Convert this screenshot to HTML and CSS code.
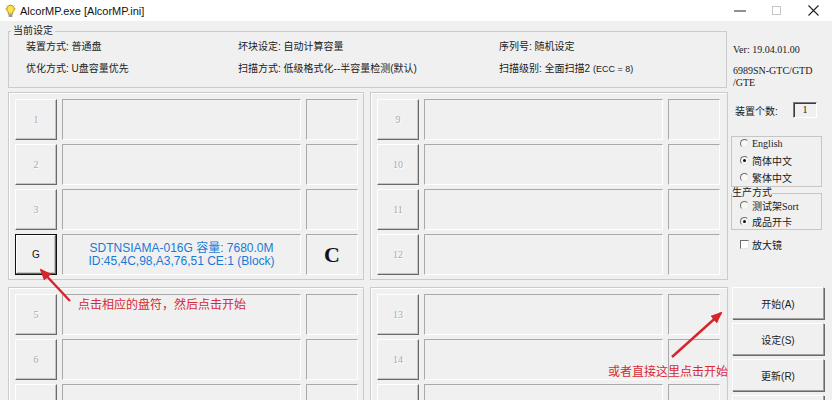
FILE: index.html
```html
<!DOCTYPE html>
<html lang="zh-CN">

<head>
    <meta charset="UTF-8">
    <meta name="viewport" content="width=device-width, initial-scale=1.0">
    <title>AlcorMP.exe [AlcorMP.ini]</title>
    <link rel="stylesheet" href="styles.css">
</head>

<body>
    <div class="window">
        <div class="titlebar">
            <svg class="app-icon" width="11" height="14" viewBox="0 0 11 14">
                <path d="M5.5 1.2a3.8 3.8 0 0 0-2.2 6.9v2h4.4v-2a3.8 3.8 0 0 0-2.2-6.9z" fill="#ffe24a" stroke="#9c8a10" stroke-width="0.9"/>
                <rect x="3.6" y="10.4" width="3.8" height="2.6" fill="#9a9a9a"/>
                <path d="M0.3 4.8h1.2M9.5 4.8h1.2M1.2 1.2l0.9 0.9M9.8 1.2l-0.9 0.9" stroke="#c9a800" stroke-width="0.8"/>
            </svg>
            <span class="title">AlcorMP.exe [AlcorMP.ini]</span>
            <div class="controls">
                <span><svg width="12" height="2"><path d="M0 1h12" stroke="#222" stroke-width="1"/></svg></span>
                <span><svg width="9" height="9"><rect x="0.5" y="0.5" width="8" height="8" fill="none" stroke="#c6c6c6"/></svg></span>
                <span><svg width="11" height="11"><path d="M0.5 0.5l10 10M10.5 0.5l-10 10" stroke="#222" stroke-width="1.1"/></svg></span>
            </div>
        </div>

        <div class="client">
            <div class="main">
                <fieldset class="settings">
                    <legend>当前设定</legend>
                    <div class="settings-grid">
                        <span>装置方式: 普通盘</span>
                        <span>坏块设定: 自动计算容量</span>
                        <span>序列号: 随机设定</span>
                        <span>优化方式: U盘容量优先</span>
                        <span>扫描方式: 低级格式化--半容量检测(默认)</span>
                        <span>扫描级别: 全面扫描2 <small>(ECC = 8)</small></span>
                    </div>
                </fieldset>

                <div class="panels">
                    <div class="panel">
                        <div class="slot"><span class="slot-btn">1</span><span class="slot-info"></span><span class="slot-flag"></span></div>
                        <div class="slot"><span class="slot-btn">2</span><span class="slot-info"></span><span class="slot-flag"></span></div>
                        <div class="slot"><span class="slot-btn">3</span><span class="slot-info"></span><span class="slot-flag"></span></div>
                        <div class="slot">
                            <span class="slot-btn active">G</span>
                            <span class="slot-info device">SDTNSIAMA-016G 容量: 7680.0M<br>ID:45,4C,98,A3,76,51 CE:1 (Block)</span>
                            <span class="slot-flag letter">C</span>
                        </div>
                    </div>
                    <div class="panel">
                        <div class="slot"><span class="slot-btn">9</span><span class="slot-info"></span><span class="slot-flag"></span></div>
                        <div class="slot"><span class="slot-btn">10</span><span class="slot-info"></span><span class="slot-flag"></span></div>
                        <div class="slot"><span class="slot-btn">11</span><span class="slot-info"></span><span class="slot-flag"></span></div>
                        <div class="slot"><span class="slot-btn">12</span><span class="slot-info"></span><span class="slot-flag"></span></div>
                    </div>
                    <div class="panel">
                        <div class="slot"><span class="slot-btn">5</span><span class="slot-info"></span><span class="slot-flag"></span></div>
                        <div class="slot"><span class="slot-btn">6</span><span class="slot-info"></span><span class="slot-flag"></span></div>
                        <div class="slot"><span class="slot-btn"></span><span class="slot-info"></span><span class="slot-flag"></span></div>
                    </div>
                    <div class="panel">
                        <div class="slot"><span class="slot-btn">13</span><span class="slot-info"></span><span class="slot-flag"></span></div>
                        <div class="slot"><span class="slot-btn">14</span><span class="slot-info"></span><span class="slot-flag"></span></div>
                        <div class="slot"><span class="slot-btn"></span><span class="slot-info"></span><span class="slot-flag"></span></div>
                    </div>
                </div>
            </div>

            <div class="side">
                <div class="ver">Ver: 19.04.01.00</div>
                <div class="model">6989SN-GTC/GTD<br>/GTE</div>
                <div class="count">
                    <span class="count-label">装置个数:</span>
                    <span class="count-box">1</span>
                </div>
                <div class="lang">
                    <div class="opt-list">
                        <label class="opt"><span class="radio"></span><span class="latin">English</span></label>
                        <label class="opt"><span class="radio on"></span><span>简体中文</span></label>
                        <label class="opt"><span class="radio"></span><span>繁体中文</span></label>
                    </div>
                </div>
                <fieldset class="mode">
                    <legend>生产方式</legend>
                    <div class="opt-list">
                        <label class="opt"><span class="radio"></span><span>测试架<span class="latin">Sort</span></span></label>
                        <label class="opt"><span class="radio on"></span><span>成品开卡</span></label>
                    </div>
                </fieldset>
                <label class="opt zoom"><span class="check"></span><span>放大镜</span></label>
                <div class="buttons">
                    <button class="btn">开始(A)</button>
                    <button class="btn">设定(S)</button>
                    <button class="btn">更新(R)</button>
                    <button class="btn"></button>
                </div>
            </div>
        </div>

        <!-- 注释箭头 -->
        <svg class="notes" width="832" height="400">
            <defs>
                <marker id="head" markerUnits="userSpaceOnUse" markerWidth="12" markerHeight="10" refX="10" refY="5" orient="auto">
                    <path d="M0 0L12 5L0 10z" fill="#d8232a"/>
                </marker>
            </defs>
            <line x1="70" y1="301" x2="41" y2="270" stroke="#d8232a" stroke-width="2.4" marker-end="url(#head)"/>
            <line x1="672" y1="357" x2="721" y2="313" stroke="#d8232a" stroke-width="2.4" marker-end="url(#head)"/>
        </svg>
        <span class="note note-a">点击相应的盘符，然后点击开始</span>
        <span class="note note-b">或者直接这里点击开始</span>
    </div>
</body>

</html>
```

FILE: styles.css
```css
* {
    box-sizing: border-box;
}

body {
    margin: 0;
    background: #f0f0f0;
    font-family: "Liberation Sans", "Noto Sans CJK SC", sans-serif;
    font-size: 10px;
    color: #1a1a1a;
}

.window {
    position: relative;
    width: 832px;
    height: 400px;
    overflow: hidden;
    background: #f0f0f0;
}

/* 标题栏 */
.titlebar {
    display: flex;
    align-items: center;
    height: 21px;
    background: #fff;
}

.app-icon {
    margin-left: 5px;
}

.title {
    margin-left: 4px;
    font-size: 11px;
    line-height: 14px;
    color: #111;
}

.controls {
    display: flex;
    margin-left: auto;
    height: 21px;
}

.controls span {
    display: flex;
    align-items: center;
    justify-content: center;
    width: 37px;
}

.client {
    display: flex;
}

.main {
    width: 728px;
}

/* 当前设定 */
.settings {
    width: 719px;
    margin: 3px 0 0 8px;
    padding: 0 0 8px 2px;
    border: 1px solid #cbcbcb;
    min-width: 0;
}

.settings legend,
.mode legend {
    padding: 0 2px;
    line-height: 14px;
}

.settings-grid {
    display: grid;
    grid-template-columns: 212px 261px 1fr;
    row-gap: 2px;
    margin: -1px 0 0 15px;
    line-height: 20px;
}

.settings-grid small {
    font-size: 9px;
}

/* 盘位面板 */
.panels {
    display: grid;
    grid-template-columns: 356px 358px;
    column-gap: 6px;
    row-gap: 7px;
    margin: 4px 0 0 8px;
}

.panel {
    display: flex;
    flex-direction: column;
    gap: 4px;
    padding: 6px 0 4px 6px;
    border: 1px solid #cbcbcb;
    box-shadow: inset 1px 1px 0 #fff;
}

.slot {
    display: grid;
    grid-template-columns: 42px 239px 52px;
    column-gap: 5px;
    height: 41px;
    flex-shrink: 0;
}

.slot-btn {
    display: flex;
    align-items: center;
    justify-content: center;
    border: 1px solid;
    border-color: #fff #6a6a6a #6a6a6a #fff;
    box-shadow: inset -1px -1px 0 #c4c4c4;
    font-family: "Liberation Serif", serif;
    font-size: 10px;
    color: #ababab;
    text-shadow: 1px 1px 0 #fff;
}

.slot-btn.active {
    border: 1px solid #111;
    box-shadow: inset -1px -1px 0 #6a6a6a, inset 1px 1px 0 #fff, inset -2px -2px 0 #c4c4c4;
    font-family: "Liberation Sans", sans-serif;
    color: #111;
    text-shadow: none;
}

.slot-info,
.slot-flag {
    border: 1px solid;
    border-color: #a9a9a9 #fff #fff #a9a9a9;
}

.device {
    display: flex;
    align-items: center;
    justify-content: center;
    text-align: center;
    font-size: 12px;
    line-height: 13px;
    color: #1b7ad6;
}

.letter {
    display: flex;
    align-items: center;
    justify-content: center;
    font-family: "Liberation Serif", serif;
    font-weight: bold;
    font-size: 22px;
    color: #111;
}

/* 右侧栏 */
.side {
    display: flex;
    flex-direction: column;
    align-items: flex-start;
    width: 104px;
}

.ver,
.model {
    margin-left: 5px;
    font-family: "Liberation Serif", serif;
    font-size: 10px;
    line-height: 12px;
}

.ver {
    margin-top: 23px;
}

.model {
    margin-top: 9px;
}

.count {
    display: flex;
    align-items: center;
    height: 16px;
    margin: 13px 0 0 7px;
}

.count-label {
    width: 58px;
}

.count-box {
    width: 24px;
    height: 16px;
    border: 1px solid;
    border-color: #7a7a7a #fff #fff #7a7a7a;
    box-shadow: inset 1px 1px 0 #3a3a3a;
    font-family: "Liberation Serif", serif;
    line-height: 14px;
    text-align: center;
}

.lang,
.mode {
    width: 91px;
    margin: 0 0 0 3px;
    border: 1px solid #c6c6c6;
}

.lang {
    margin-top: 18px;
}

.mode {
    padding: 0;
    min-width: 0;
}

.mode legend {
    padding: 0;
    line-height: 12px;
}

.opt-list {
    margin-top: -2px;
}

.opt {
    display: flex;
    align-items: center;
    gap: 3px;
    height: 17px;
    padding-left: 8px;
}

.mode .opt {
    height: 16px;
}

.latin {
    font-family: "Liberation Serif", serif;
}

.radio {
    display: grid;
    place-items: center;
    width: 9px;
    height: 9px;
    border: 1px solid;
    border-color: #6e6e6e #e6e6e6 #e6e6e6 #6e6e6e;
    border-radius: 50%;
    background: #f7f7f7;
}

.radio.on::after {
    content: "";
    width: 3px;
    height: 3px;
    border-radius: 50%;
    background: #111;
}

.zoom {
    margin-top: 6px;
    padding-left: 12px;
}

.check {
    width: 9px;
    height: 9px;
    border: 1px solid;
    border-color: #6e6e6e #e6e6e6 #e6e6e6 #6e6e6e;
    background: #fff;
}

.buttons {
    display: flex;
    flex-direction: column;
    gap: 4px;
    margin: 34px 0 0 4px;
}

.btn {
    width: 92px;
    height: 32px;
    padding: 0;
    border: 1px solid;
    border-color: #fff #a0a0a0 #a0a0a0 #fff;
    box-shadow: 1px 1px 0 #6a6a6a;
    background: #f0f0f0;
    font-family: "Liberation Sans", "Noto Sans CJK SC", sans-serif;
    font-size: 10px;
    color: #1a1a1a;
}

/* 注释 */
.notes {
    position: absolute;
    top: 0;
    left: 0;
    pointer-events: none;
}

.note {
    position: absolute;
    font-family: "Noto Sans CJK SC", sans-serif;
    font-size: 12px;
    line-height: 14px;
    color: #d62a36;
}

.note-a {
    left: 78px;
    top: 297px;
}

.note-b {
    left: 608px;
    top: 364px;
}
```
